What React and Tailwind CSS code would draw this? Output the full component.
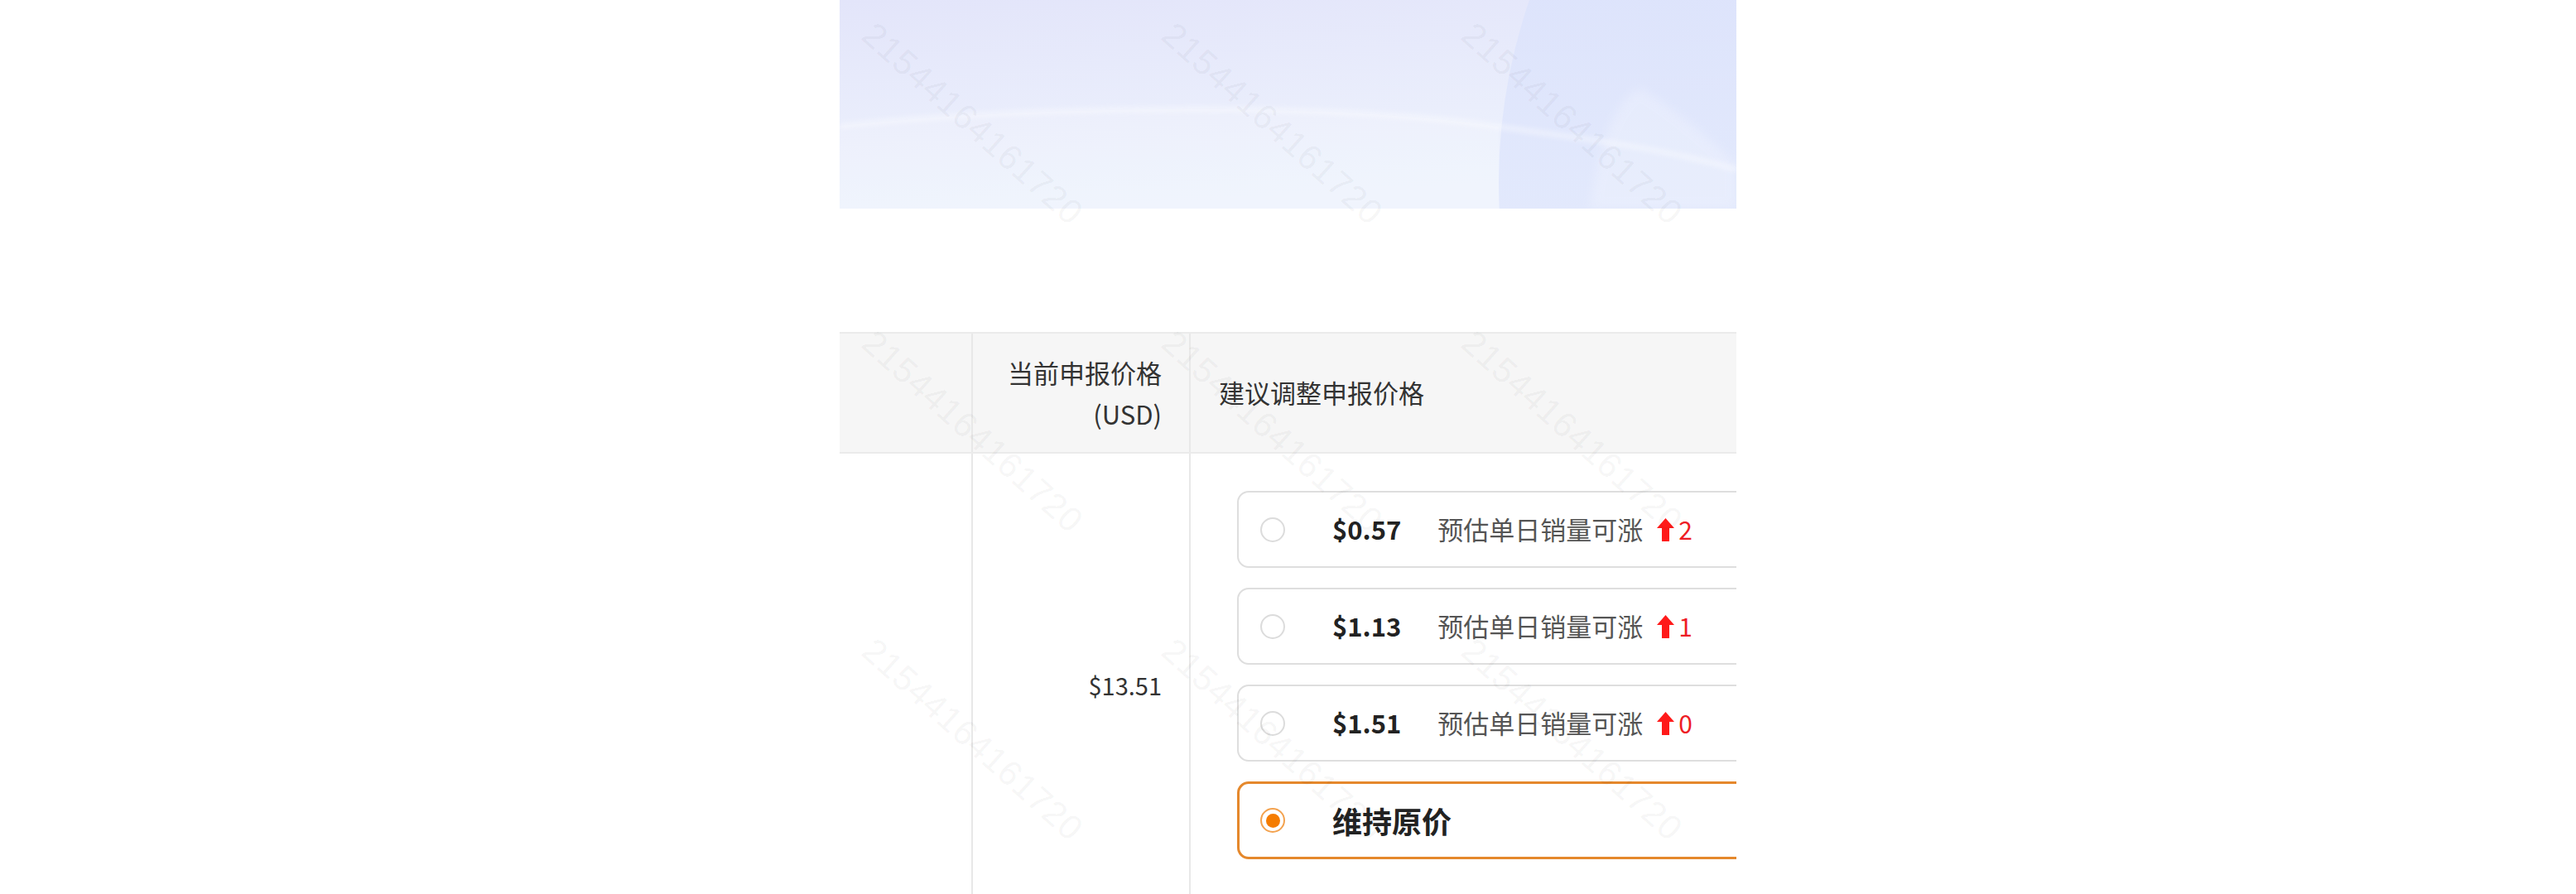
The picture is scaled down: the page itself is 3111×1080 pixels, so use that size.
import { Fragment } from "react";

const WATERMARK = "21544164161720";

const options = [
  { price: "$0.57", up: 2 },
  { price: "$1.13", up: 1 },
  { price: "$1.51", up: 0 },
];

const UpArrow = () => (
  <svg width="21" height="28" viewBox="0 0 21 28" className="block">
    <path d="M10.5 0 L21 12 L15 12 L15 28 L6 28 L6 12 L0 12 Z" fill="#ff1a1a" />
  </svg>
);

const Banner = () => (
  <div className="h-[252px] w-full">
    <svg width="1083" height="252" viewBox="0 0 1083 252" className="block">
      <defs>
        <linearGradient id="bannerBg" x1="0" y1="0" x2="0.25" y2="1">
          <stop offset="0" stopColor="#e3e5fa" />
          <stop offset="1" stopColor="#eef3fd" />
        </linearGradient>
        <linearGradient id="bannerCircle" x1="0" y1="0" x2="0" y2="1">
          <stop offset="0" stopColor="#d5ddfb" />
          <stop offset="1" stopColor="#e8eefd" />
        </linearGradient>
        <filter id="soft">
          <feGaussianBlur stdDeviation="3" />
        </filter>
        <filter id="softer">
          <feGaussianBlur stdDeviation="6" />
        </filter>
      </defs>
      <rect width="1083" height="252" fill="url(#bannerBg)" />
      <path d="M0 152 C 250 126, 600 124, 796 153 L796 252 L0 252 Z" fill="#ffffff" opacity="0.15" />
      <circle cx="1468" cy="220" r="672" fill="url(#bannerCircle)" opacity="0.8" />
      <path
        d="M906 252 Q 925 125 966 107 Q 1010 130 1083 198 L1083 252 Z"
        fill="#ffffff"
        opacity="0.22"
        filter="url(#softer)"
      />
      <path
        d="M0 152 C 250 126, 600 124, 796 153 C 900 168, 1000 180, 1083 205"
        stroke="#ffffff"
        strokeWidth="4"
        fill="none"
        opacity="0.6"
        filter="url(#soft)"
      />
    </svg>
  </div>
);

const Radio = ({ checked }) =>
  checked ? (
    <span className="flex h-[30px] w-[30px] shrink-0 items-center justify-center rounded-full border-2 border-[#f3a24f]">
      <span className="h-[17px] w-[17px] rounded-full bg-[#f57c00]" />
    </span>
  ) : (
    <span className="h-[30px] w-[30px] shrink-0 rounded-full border-2 border-[#dcdcdc]" />
  );

const OptionCard = ({ price, up }) => (
  <div className="flex h-[93px] w-[640px] shrink-0 items-center rounded-[14px] border-2 border-[#dedede] pl-[26px]">
    <Radio />
    <span className="ml-[57px] text-[31px] font-bold text-[#222]">{price}</span>
    <span className="ml-[44px] text-[31px] text-[#555]">预估单日销量可涨</span>
    <span className="ml-[17px]">
      <UpArrow />
    </span>
    <span className="ml-[5px] text-[30px] text-[#ee1c25]">{up}</span>
  </div>
);

const Watermark = () => (
  <div className="pointer-events-none absolute inset-0 overflow-hidden">
    <div className="grid grid-cols-[repeat(3,362px)] auto-rows-[372px] pl-[48px] pt-[20px]">
      {Array.from({ length: 9 }).map((_, i) => (
        <div key={i}>
          <span className="block origin-top-left rotate-[42deg] whitespace-nowrap font-['Liberation_Sans',sans-serif] text-[42px] leading-none tracking-[1px] text-[rgba(0,0,0,0.05)]">
            {WATERMARK}
          </span>
        </div>
      ))}
    </div>
  </div>
);

export default function App() {
  return (
    <div className="min-h-screen bg-white font-['Noto_Sans_CJK_SC',sans-serif] text-[#333]">
      <div className="relative mx-auto h-[1080px] w-[1083px] overflow-hidden">
        <Banner />
        <div className="h-[149px]" />

        {/* header */}
        <div className="grid h-[147px] grid-cols-[159px_263px_1fr] border-y-2 border-[#ebebeb] bg-[#f6f6f6]">
          <div />
          <div className="flex flex-col items-end justify-center border-l-2 border-[#e8e8e8] pr-[33px] text-[31px] leading-[50px]">
            <span>当前申报价格</span>
            <span>(USD)</span>
          </div>
          <div className="flex items-center border-l-2 border-[#e8e8e8] pl-[34px] text-[31px]">
            建议调整申报价格
          </div>
        </div>

        {/* body */}
        <div className="grid grid-cols-[159px_263px_1fr]">
          <div />
          <div className="flex items-center justify-end border-l-2 border-[#e8e8e8] pr-[33px] text-[29px]">
            $13.51
          </div>
          <div className="flex flex-col gap-[24px] border-l-2 border-[#e8e8e8] pb-[70px] pl-[56px] pt-[45px]">
            {options.map((o) => (
              <Fragment key={o.price}>
                <OptionCard {...o} />
              </Fragment>
            ))}
            <div className="flex h-[94px] w-[640px] shrink-0 items-center rounded-[14px] border-[3px] border-[#e5882c] pl-[25px]">
              <Radio checked />
              <span className="ml-[57px] text-[36px] font-bold text-[#222]">维持原价</span>
            </div>
          </div>
        </div>

        <Watermark />
      </div>
    </div>
  );
}
